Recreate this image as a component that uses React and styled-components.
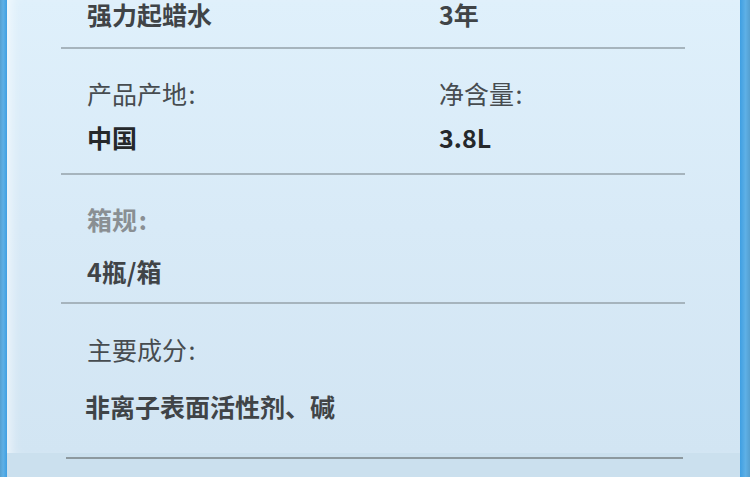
import React from "react";
import styled, { createGlobalStyle } from "styled-components";

const GlobalStyle = createGlobalStyle`
  html, body {
    margin: 0;
    padding: 0;
    background: #d6e8f5;
  }
  body {
    font-family: "Noto Sans CJK SC", "Noto Sans", sans-serif;
  }
`;

const specs = [
  { cells: [{ value: "强力起蜡水" }, { value: "3年" }], first: true },
  {
    cells: [
      { label: "产品产地 :", value: "中国", dark: true },
      { label: "净含量 :", value: "3.8L", dark: true },
    ],
    pad: [29, 21],
    gap: 14,
  },
  { cells: [{ label: "箱规 :", value: "4瓶/箱", faded: true }], pad: [29, 16], gap: 22 },
  { cells: [{ label: "主要成分 :", value: "非离子表面活性剂、碱" }], pad: [30, 0], gap: 27, last: true },
];

function App() {
  return (
    <>
      <GlobalStyle />
      <Page>
        <Stripe />
        <Main>
          <Panel>
            {specs.map((s, i) => (
              <Section
                key={i}
                $first={s.first}
                $top={s.pad ? s.pad[0] : 0}
                $bottom={s.pad ? s.pad[1] : 0}
                $last={s.last}
              >
                {s.cells.map((c, j) => (
                  <Cell key={j}>
                    {c.label && <Label $faded={c.faded}>{c.label}</Label>}
                    <Value
                      $gap={c.label ? s.gap : 0}
                      $dark={c.dark}
                      $wide={s.last}
                      $tight={s.first}
                    >
                      {c.value}
                    </Value>
                  </Cell>
                ))}
              </Section>
            ))}
          </Panel>
          <Footer>
            <FooterLine />
          </Footer>
        </Main>
        <Stripe $right />
      </Page>
    </>
  );
}

const Page = styled.div`
  display: flex;
  width: 750px;
  height: 477px;
  overflow: hidden;
`;

const Stripe = styled.div`
  width: ${(p) => (p.$right ? "10px" : "7px")};
  flex-shrink: 0;
  background: linear-gradient(
    ${(p) => (p.$right ? "90deg" : "270deg")},
    #3f9fe2 0%,
    #5eb0e6 55%,
    #559fcf 100%
  );
`;

const Main = styled.div`
  flex: 1;
  display: flex;
  flex-direction: column;
`;

const Panel = styled.div`
  height: 453px;
  flex-shrink: 0;
  padding: 0 55px 0 54px;
  background: linear-gradient(180deg, #dff0fb 0%, #d8eaf7 50%, #d2e5f3 100%);
  box-shadow: inset 12px 0 14px -10px rgba(255, 255, 255, 0.8);
`;

const Section = styled.div`
  display: grid;
  grid-template-columns: 352px 1fr;
  box-sizing: border-box;
  padding: ${(p) => p.$top}px 0 ${(p) => p.$bottom}px 26px;
  border-bottom: ${(p) => (p.$last ? "none" : "2px solid #a6b4bd")};
  ${(p) => p.$first && "height: 49px;"}
`;

const Cell = styled.div`
  display: flex;
  flex-direction: column;
`;

const Label = styled.div`
  font-size: 25px;
  line-height: 30px;
  white-space: pre;
  word-spacing: -4px;
  color: ${(p) => (p.$faded ? "#8a8f93" : "#474c50")};
  font-weight: ${(p) => (p.$faded ? 700 : 400)};
`;

const Value = styled.div`
  margin-top: ${(p) => p.$gap}px;
  margin-left: ${(p) => (p.$wide ? "-2px" : "0")};
  font-size: 25px;
  line-height: ${(p) => (p.$tight ? "28px" : "30px")};
  font-weight: 700;
  white-space: nowrap;
  color: ${(p) => (p.$dark ? "#25282b" : "#404447")};
`;

const Footer = styled.div`
  flex: 1;
  padding: 4px 57px 0 59px;
  background: #cbe0ee;
`;

const FooterLine = styled.div`
  height: 2px;
  background: #8d999f;
`;

export default App;
